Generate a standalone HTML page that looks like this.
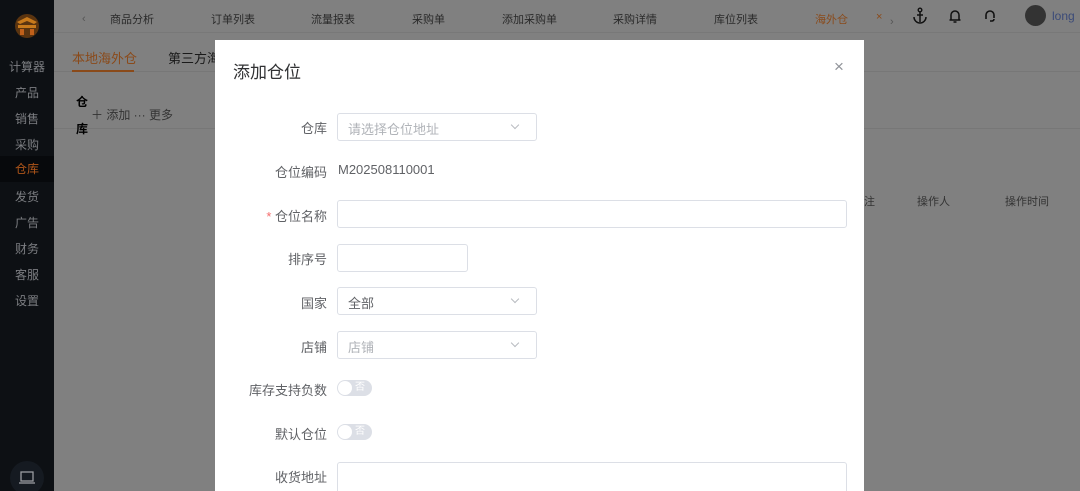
<!DOCTYPE html>
<html><head><meta charset="utf-8"><style>
*{margin:0;padding:0;box-sizing:border-box}
html,body{width:1080px;height:491px;overflow:hidden}
body{position:relative;background:#808080;font-family:"Liberation Sans","Noto Sans CJK SC",sans-serif;font-size:12px;color:#222}
.a{position:absolute;white-space:nowrap}
.side{position:absolute;left:0;top:0;width:54px;height:491px;background:#0d1014}
.side .i{position:absolute;left:0;width:54px;text-align:center;color:#7c7e82;font-size:12px}
.nav{color:#2a2a2a;font-size:11px}
.lbl{position:absolute;right:753px;font-size:13px;color:#606266;text-align:right;white-space:nowrap}
.modal{position:absolute;left:215px;top:40px;width:649px;height:451px;background:#fff}
.in{position:absolute;border:1px solid #dcdfe6;border-radius:3px;background:#fff}
.ph{position:absolute;left:10px;top:5px;font-size:13px;color:#b0b3b8}
.chev{position:absolute;right:18px;top:8px;width:6px;height:6px;border-right:1px solid #b8bbc0;border-bottom:1px solid #b8bbc0;transform:rotate(45deg)}
.sw{position:absolute;width:35px;height:16px;border-radius:8px;background:#dcdfe6}
.sw b{position:absolute;left:1px;top:1px;width:14px;height:14px;border-radius:50%;background:#fff}
.sw span{position:absolute;left:18px;top:0;font-size:10px;color:#fff;line-height:16px}
</style></head><body>
<div class="side">
 <svg class="a" style="left:14px;top:13px" width="26" height="26" viewBox="0 0 26 26"><circle cx="13" cy="13" r="12" fill="#5a3410"/><path d="M3 9 L13 4 L23 9 L20 11 L13 8 L6 11Z" fill="#c87a1c"/><path d="M4 12h18v3H4z" fill="#c87a1c"/><path d="M6 16h4v6H6zM16 16h4v6h-4z" fill="#c0601a"/></svg>
 <div class="i" style="top:58px">计算器</div>
 <div class="i" style="top:84px">产品</div>
 <div class="i" style="top:110px">销售</div>
 <div class="i" style="top:136px">采购</div>
 <div class="i" style="top:156px;height:26px;line-height:26px;background:#07090c;color:#b0561a">仓库</div>
 <div class="i" style="top:188px">发货</div>
 <div class="i" style="top:214px">广告</div>
 <div class="i" style="top:240px">财务</div>
 <div class="i" style="top:266px">客服</div>
 <div class="i" style="top:292px">设置</div>
 <div class="a" style="left:10px;top:461px;width:34px;height:34px;border-radius:50%;background:#151a21"></div>
 <svg class="a" style="left:19px;top:471px" width="16" height="14" viewBox="0 0 16 14"><rect x="2" y="1" width="12" height="9" fill="none" stroke="#9a9ca0" stroke-width="1.3"/><path d="M0 12h16" stroke="#9a9ca0" stroke-width="1.3"/></svg>
</div>
<div class="a" style="left:54px;top:32px;width:1026px;height:1px;background:#787878"></div>
<div class="a" style="left:54px;top:71px;width:1026px;height:1px;background:#777"></div>
<div class="a" style="left:54px;top:128px;width:1026px;height:1px;background:#777"></div>
<div class="a nav" style="left:82px;top:13px;color:#555">‹</div>
<div class="a nav" style="left:110px;top:11px">商品分析</div>
<div class="a nav" style="left:211px;top:11px">订单列表</div>
<div class="a nav" style="left:311px;top:11px">流量报表</div>
<div class="a nav" style="left:412px;top:11px">采购单</div>
<div class="a nav" style="left:502px;top:11px">添加采购单</div>
<div class="a nav" style="left:613px;top:11px">采购详情</div>
<div class="a nav" style="left:714px;top:11px">库位列表</div>
<div class="a nav" style="left:815px;top:11px;color:#8a4a1a">海外仓</div>
<div class="a nav" style="left:876px;top:11px;color:#8a4a1a">×</div>
<div class="a nav" style="left:890px;top:16px;color:#555">›</div>
<svg class="a" style="left:912px;top:7px" width="16" height="17" viewBox="0 0 16 17"><circle cx="8" cy="3" r="1.8" fill="none" stroke="#111" stroke-width="1.4"/><path d="M8 5v10M5 8h6M2 10a6 6 0 0 0 12 0" fill="none" stroke="#111" stroke-width="1.5"/></svg>
<svg class="a" style="left:947px;top:8px" width="16" height="16" viewBox="0 0 16 16"><path d="M4 12V7a4 4 0 0 1 8 0v5M2.5 12h11M6.5 14h3" fill="none" stroke="#111" stroke-width="1.5"/></svg>
<svg class="a" style="left:982px;top:8px" width="16" height="16" viewBox="0 0 16 16"><path d="M4 11V7a4 4 0 0 1 8 0v3M4 8v3M8 13h2a2 2 0 0 0 2-2" fill="none" stroke="#111" stroke-width="1.6"/></svg>
<div class="a" style="left:1025px;top:5px;width:21px;height:21px;border-radius:50%;background:#333"></div>
<div class="a" style="left:1052px;top:9px;font-size:12px;color:#3a4a78">long</div>
<div class="a" style="left:72px;top:48px;font-size:13px;color:#8a4a1a">本地海外仓</div>
<div class="a" style="left:72px;top:70px;width:62px;height:2px;background:#8a4a1a"></div>
<div class="a" style="left:168px;top:48px;font-size:13px;color:#1a1a1a">第三方海</div>
<div class="a" style="left:76px;top:93px;font-size:12px;font-weight:bold;color:#000">仓</div>
<div class="a" style="left:76px;top:120px;font-size:12px;font-weight:bold;color:#000">库</div>
<div class="a" style="left:91px;top:106px;font-size:12px;color:#333">＋ 添加 ··· 更多</div>
<div class="a" style="left:917px;top:193px;font-size:11px;color:#333">操作人</div>
<div class="a" style="left:1005px;top:193px;font-size:11px;color:#333">操作时间</div>
<div class="a" style="left:864px;top:193px;font-size:11px;color:#333">注</div>
<div class="modal">
 <div class="a" style="left:18px;top:18px;font-size:17px;color:#303133">添加仓位</div>
 <div class="a" style="left:619px;top:17px;font-size:17px;color:#909399">×</div>
</div>
<div class="lbl" style="top:118px">仓库</div>
<div class="in" style="left:337px;top:113px;width:200px;height:28px"><div class="ph">请选择仓位地址</div><div class="chev"></div></div>
<div class="lbl" style="top:162px">仓位编码</div>
<div class="a" style="left:338px;top:162px;font-size:13px;color:#606266">M202508110001</div>
<div class="lbl" style="top:206px"><span style="color:#f56c6c">*</span> 仓位名称</div>
<div class="in" style="left:337px;top:200px;width:510px;height:28px"></div>
<div class="lbl" style="top:249px">排序号</div>
<div class="in" style="left:337px;top:244px;width:131px;height:28px"></div>
<div class="lbl" style="top:293px">国家</div>
<div class="in" style="left:337px;top:287px;width:200px;height:28px"><div class="ph" style="color:#606266">全部</div><div class="chev"></div></div>
<div class="lbl" style="top:337px">店铺</div>
<div class="in" style="left:337px;top:331px;width:200px;height:28px"><div class="ph">店铺</div><div class="chev"></div></div>
<div class="lbl" style="top:380px">库存支持负数</div>
<div class="sw" style="left:337px;top:380px"><b></b><span>否</span></div>
<div class="lbl" style="top:424px">默认仓位</div>
<div class="sw" style="left:337px;top:424px"><b></b><span>否</span></div>
<div class="lbl" style="top:467px">收货地址</div>
<div class="in" style="left:337px;top:462px;width:510px;height:40px"></div>
</body></html>
